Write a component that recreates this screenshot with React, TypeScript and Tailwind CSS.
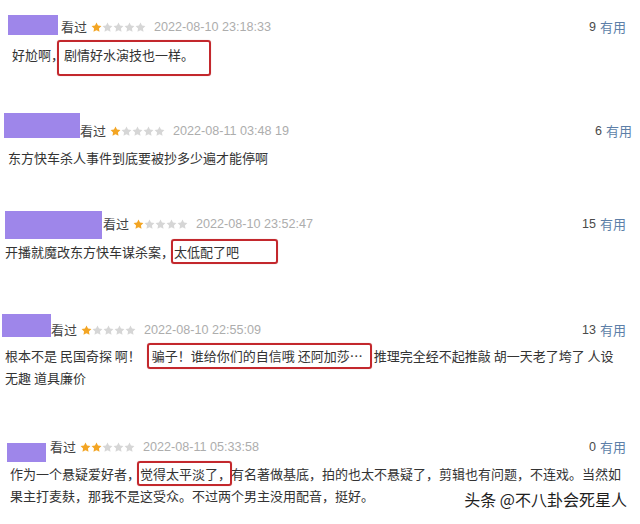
import type { ReactNode } from "react";

const CJK = "font-['Noto_Sans_CJK_SC','Noto_Sans',sans-serif]";

function Star({ on }: { on: boolean }) {
  return (
    <svg viewBox="0 0 24 24" className="w-[11px] h-[11px]">
      <path
        d="M12 1l3.3 6.8 7.4 1.1-5.4 5.2 1.3 7.4L12 18l-6.6 3.5 1.3-7.4L1.3 8.9l7.4-1.1z"
        fill={on ? "#f3a524" : "#d6d6d6"}
      />
    </svg>
  );
}

function Stars({ n }: { n: number }) {
  return (
    <div className="flex items-center ml-[4px]">
      {[0, 1, 2, 3, 4].map((i) => (
        <Star key={i} on={i < n} />
      ))}
    </div>
  );
}

// 红框标注，盖在文字上
function Mark({ children, box, className = "" }: { children: ReactNode; box: string; className?: string }) {
  return (
    <span className={`relative inline-block leading-[22px] ${className}`}>
      {children}
      <span className={`absolute border-2 border-[#c3282d] rounded-[3px] shadow-[0_0_1px_rgba(150,0,0,0.4)] ${box}`} />
    </span>
  );
}

type Entry = {
  row: string;
  block: string;
  text: string;
  stars: number;
  date: string;
  useful: string;
  usefulPad: string;
  comment: string;
  body: ReactNode;
};

const entries: Entry[] = [
  {
    row: "pt-[15px] pl-[8px]",
    block: "w-[50px] h-[20px]",
    text: "ml-[3px] mt-[4px]",
    stars: 1,
    date: "2022-08-10 23:18:33",
    useful: "9",
    usefulPad: "pr-[14px]",
    comment: "mt-[9px] pl-[12px]",
    body: (
      <>
        好尬啊，
        <Mark box="-left-[7px] -right-[17px] -top-[4px] -bottom-[10px]">剧情好水演技也一样。</Mark>
      </>
    ),
  },
  {
    row: "mt-[47px] pl-[4px]",
    block: "w-[76px] h-[25px]",
    text: "ml-[0px] mt-[10px]",
    stars: 1,
    date: "2022-08-11 03:48 19",
    useful: "6",
    usefulPad: "pr-[8px]",
    comment: "mt-[8px] pl-[8px]",
    body: <>东方快车杀人事件到底要被抄多少遍才能停啊</>,
  },
  {
    row: "mt-[42px] pl-[5px]",
    block: "w-[97px] h-[28px]",
    text: "ml-[1px] mt-[5px]",
    stars: 1,
    date: "2022-08-10 23:52:47",
    useful: "15",
    usefulPad: "pr-[14px]",
    comment: "mt-[2px] pl-[5px]",
    body: (
      <>
        开播就魔改东方快车谋杀案，
        <Mark box="-left-[3px] -right-[39px] -top-[2px] -bottom-[1px]">太低配了吧</Mark>
      </>
    ),
  },
  {
    row: "mt-[51px] pl-[2px]",
    block: "w-[49px] h-[23px]",
    text: "ml-[0px] mt-[8px]",
    stars: 1,
    date: "2022-08-10 22:55:09",
    useful: "13",
    usefulPad: "pr-[14px]",
    comment: "mt-[7px] pl-[5px]",
    body: (
      <>
        根本不是 民国奇探 啊！
        <Mark className="ml-[11px]" box="-left-[5px] -right-[9px] -top-[2px] -bottom-[2px]">
          骗子！谁给你们的自信哦 还阿加莎…
        </Mark>
        <span className="ml-[11px]">推理完全经不起推敲 胡一天老了垮了 人设</span>
        <br />
        无趣 道具廉价
      </>
    ),
  },
  {
    row: "mt-[50px] pl-[7px]",
    block: "w-[39px] h-[19px] mt-[4px]",
    text: "ml-[4px] mt-[0px]",
    stars: 2,
    date: "2022-08-11 05:33:58",
    useful: "0",
    usefulPad: "pr-[14px]",
    comment: "mt-[1px] pl-[10px]",
    body: (
      <>
        作为一个悬疑爱好者，
        <Mark box="-left-[3px] -right-[1px] -top-[2px] -bottom-[1px]">觉得太平淡了，</Mark>
        有名著做基底，拍的也太不悬疑了，剪辑也有问题，不连戏。当然如
        <br />
        果主打麦麸，那我不是这受众。不过两个男主没用配音，挺好。
      </>
    ),
  },
];

function Review({ e }: { e: Entry }) {
  return (
    <div>
      <div className={`flex items-start ${e.row} ${e.usefulPad}`}>
        <div className={`bg-[#9e86ea] shrink-0 ${e.block}`} />
        <div className={`flex items-center h-[16px] flex-1 ${e.text}`}>
          <span className={`text-[13px] leading-[16px] text-[#444] ${CJK}`}>看过</span>
          <Stars n={e.stars} />
          <span className="ml-[8px] text-[12.6px] leading-[16px] text-[#adadad] font-['Liberation_Sans',Arial,sans-serif]">
            {e.date}
          </span>
          <span className="ml-auto flex items-center gap-[4px]">
            <span className="text-[12.5px] text-[#4a4a4a] font-['Liberation_Sans',Arial,sans-serif]">{e.useful}</span>
            <span className={`text-[13px] text-[#5d7fa8] ${CJK}`}>有用</span>
          </span>
        </div>
      </div>
      <div className={`text-[13px] leading-[22px] text-[#333] whitespace-nowrap ${CJK} ${e.comment}`}>{e.body}</div>
    </div>
  );
}

export default function App() {
  return (
    <div className="relative w-[640px] h-[524px] bg-white overflow-hidden">
      {entries.map((e, i) => (
        <Review key={i} e={e} />
      ))}
      <div
        className={`absolute right-[13px] top-[489px] text-[16px] leading-[20px] text-[#1e1e1e] [text-shadow:0_0_2px_#fff,0_0_2px_#fff] ${CJK}`}
      >
        头条 @不八卦会死星人
      </div>
    </div>
  );
}
